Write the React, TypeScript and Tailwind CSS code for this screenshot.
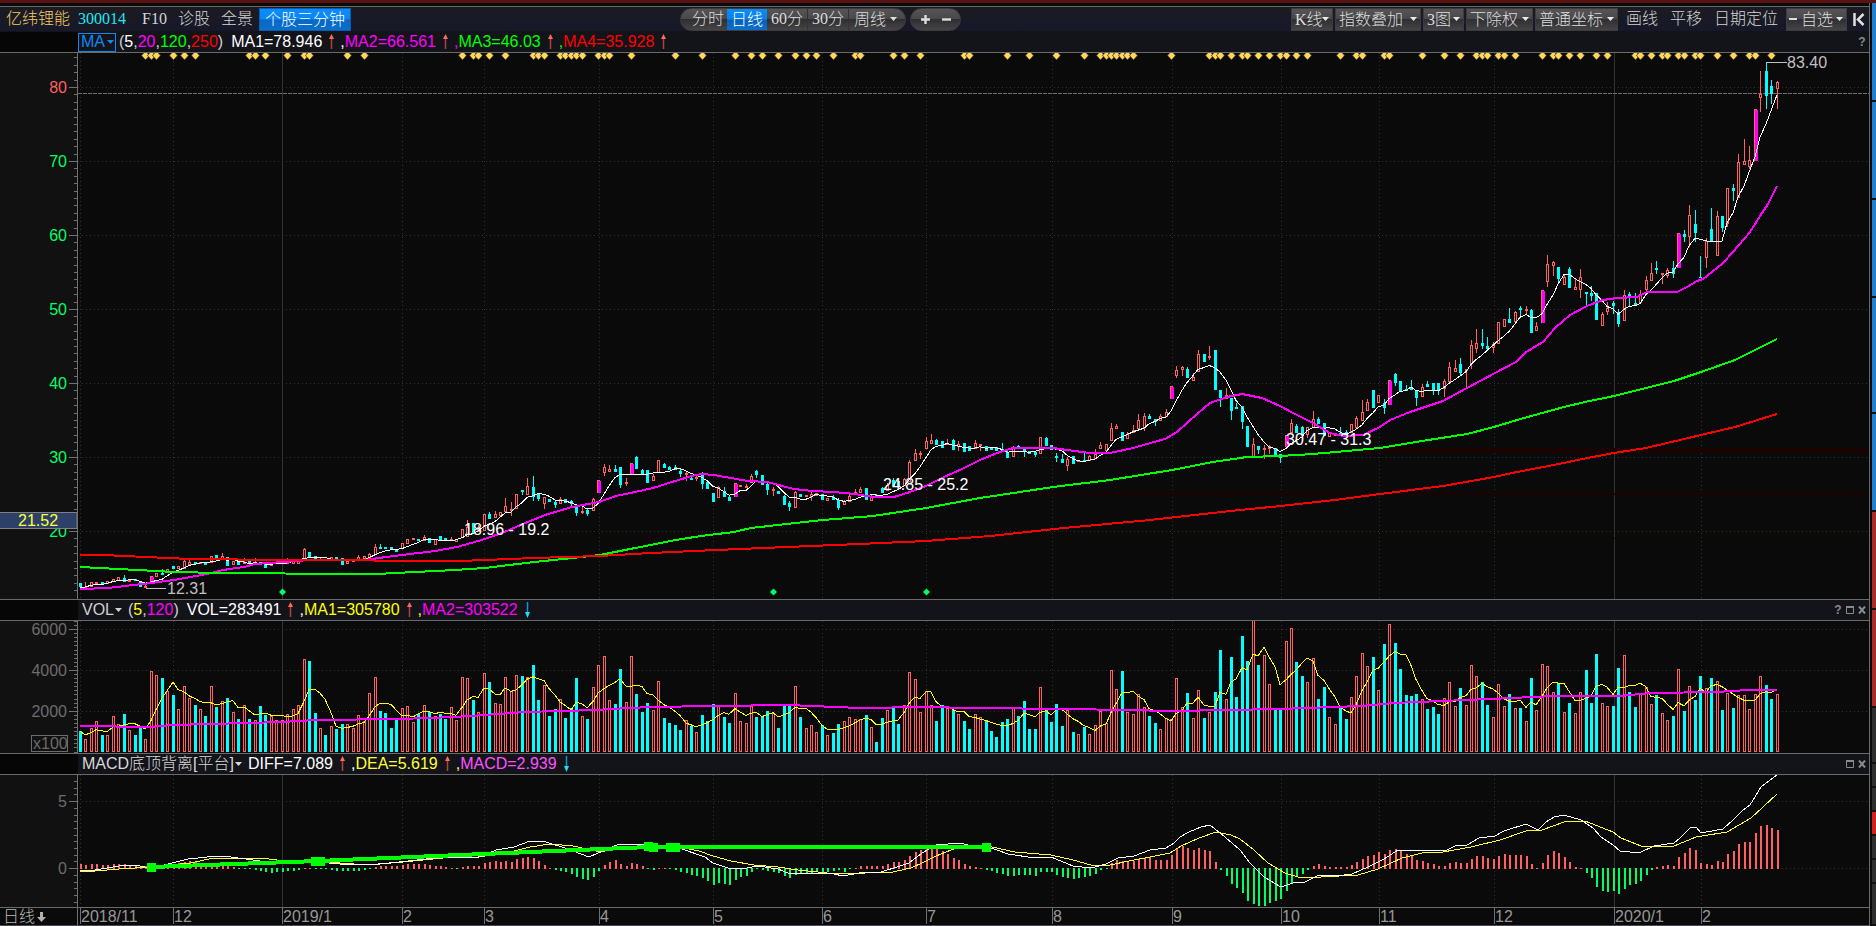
import React from "react";

type Kind = "r" | "c" | "m";
interface Candle {
  kind: Kind;
  high: number;
  top: number;
  bottom: number;
  low: number;
}

const RED = "#ff6060";
const CYAN = "#00ffff";
const MAGENTA = "#ff00ff";
const GREEN = "#00ff66";
const FONT = "'Liberation Sans', 'Noto Sans CJK SC', sans-serif";

const STEP = 5.455;
const FIRST_X = 80;
const barX = (i: number) => Math.round(FIRST_X + i * STEP);

// r = rising, c = falling, m = limit up; numbers are top,bottom | high,top,bottom | high,top,bottom,low
const CANDLES: Candle[] = `
c583,587 r582,587,588 r582,587 r582,584 c582,584 r581,584 r579,582 r577,581 c575,578,582 r580,582
c579,581 c581,587 r584,586,588 m576,583 r573,577 c569,573,575 r569,572 c566,569 r566,569 r560,561,569
r560,562,565 c562,564 r562,564 c563,565 r556,563 c555,558 r553,556,559 c557,566 r561,565 c561,565
r558,562,564 c561,564 r558,562,564 c562,564 c563,568 r563,566 r562,564 r561,564 r558,561,564 r561,564
r560,564 r548,549,559 c552,558 c556,560 r558,559,561 c559,561 r557,560 c557,559 c558,565 r561,564
r560,562 r555,557,560 r556,559 r553,554,559 r544,547,555 c544,547,549 c547,549 c547,550 c549,552 r543,549
r539,544 r538,540 c539,541 r535,537,541 c538,543 r539,545 c536,541 c538,541 r537,539,541 r539,542
r529,538 r520,527,537 c523,534 r525,527,532 r514,531 c512,514,519 r511,514,518 r512,516 r498,506,512 r502,509,511,516
r494,509 c490,490,492,495 r478,486,495 c476,487,497,501 c493,494,499,501 r497,497,504,509 c499,502 c500,502,505,508 r497,499,504 c499,503
c500,501,504,507 c505,505,513,516 r507,511,513,514 c508,510,514,516 r498,499,511 m480,493 r464,467,473,476 r465,469,472 c465,469,472 c467,467,485,488
r478,482,484,486 m463,474 c456,457,469 c469,470,474 c470,483 r474,476,481 r460,473 c463,464,468 c466,467,470 c465,467,470
c469,471,474,477 r472,473,475,481 c475,478,480 r476,477,479,481 c472,475,484,489 c482,489 c493,502 r486,487,498 c487,491,497 c495,497,501
m483,497 r485,487 r484,486,488 r474,476,483 c470,471,475,478 c475,485 c483,484,490,495 r487,489,491,496 c491,494 c495,496,505
c501,503,507,511 r491,492,508 c494,497 r495,497 r492,494,497,501 r493,496 c494,500 r498,501 c495,497,500 c498,500,508,510
r500,501,505 r493,496,502 r489,492,494 r487,489,493 c488,500 r495,497,501 c494,495,497 c487,488,493 r483,485,491 c478,480,486
c481,487 r478,479,486 r460,462,482 r449,453,461 r451,453,455,459 r437,441,449 r434,440,444 c439,440,445 c441,448 r439,443,445
c439,440,450 r441,444,447,451 c443,452 c446,451 r440,443,449 r444,444,446,451 c446,451 c447,450 c447,451 c443,449,451
c450,452,458 r446,448,457 c445,446,449 c448,449,452,457 c451,454 c451,452,455,457 r437,454 c437,438,446 c445,450 c453,456,458,462
c454,459,463 r457,459,466,471 c456,464 r460,462 c453,460,462 r455,456,461 r449,454,459 r442,445,449 r444,451 r423,428,441
r424,426,429 c432,441 r432,434,439 r425,430,433 r414,420,429 r413,416,428,431 c414,416,419 c419,419,422,426 r414,416,421 r409,412,417
m386,399 r366,370,376,378 r366,367,370,376 c367,369,378 r373,377,381 r350,354,372 c354,362 r346,356,358,360 c350,390 c390,390,398,407
r388,395,399 c398,398,411,420 c403,407,409 c406,406,422,429 c426,447 r438,444,457 c446,446,450,454 r445,448,450,459 r445,446,449,454 c448,455
c454,454,458,463 m435,447 r419,423,433 c424,426,433 c426,427,435 r427,427,435,438 r411,419,428 c417,419,424 c423,436 r433,437
r433,436 c427,433,435 c430,432,436 r424,433 r416,418,428 r400,412,421 r399,402,411 c390,408 r395,403 c399,403,408,414
m380,405 c373,374,383,386 c381,391 c385,389,391 c380,388,390 c390,390,398,406 r384,387,397 c381,384,387 c383,383,391,395 c383,383,391,395
r379,381,389,397 r362,367,382 r360,368,372 c358,364,373,375 r369,369,371,388 r340,345,364,369 r329,343,349,353 c329,343,346,349 c337,346,349,351 r342,344,348,353
r322,344 r319,327 c308,319,323 r311,312,322 c306,308,310,318 r306,309,311,314 c309,310,333 r322,326,331 m290,323 r255,264,282,287
r261,262,266,276 c267,267,279,282 r275,277,285 c267,269,288 r278,287,290 r269,277,290,298 c292,292,294,306 c286,293,296,301 c293,320 r312,314,326
r302,308,312,315 c301,303,306,314 c309,312,324,327 r290,295,321 c292,294,298,306 c293,303,306 r290,294,303 r276,280,290,294 r263,273,281 c261,268,270,274
r273,273,275,284 r268,270,276,278 c261,268,274,278 m233,268 c230,234,237,242 r205,215,237,247 c210,224,233,242 c256,277,278 r238,241,258,268 c208,229,242
r211,216,256 c216,216,228,232 r188,188,224,227 c184,188,191,201 r154,162,198 r139,161,165 r146,160,167,169 m109,161 r71,94,98,112 c62,71,96,109
c80,86,94,104 r81,82,89,109
`
  .trim()
  .split(/\s+/)
  .map((token) => {
    const kind = token[0] as Kind;
    const n = token.slice(1).split(",").map(Number);
    if (n.length === 2) return { kind, high: n[0], top: n[0], bottom: n[1], low: n[1] };
    return { kind, high: n[0], top: n[1], bottom: n[2], low: n[3] ?? n[2] };
  });

const VOLUMES: number[] = [
  21, 13, 24, 31, 17, 17, 36, 28, 38, 22, 17, 24, 13, 81, 77, 74, 61, 57, 43, 66, 54, 47, 43, 36, 66, 45, 51, 54, 40, 33,
  47, 33, 32, 46, 37, 36, 32, 32, 38, 43, 47, 93, 91, 39, 24, 17, 26, 23, 28, 28, 24, 37, 31, 59, 75, 41, 39, 24, 32, 44,
  46, 30, 38, 47, 40, 36, 38, 33, 45, 32, 75, 74, 52, 40, 79, 70, 49, 48, 75, 61, 77, 76, 75, 87, 52, 67, 36, 43, 53, 34,
  44, 74, 36, 33, 65, 87, 96, 52, 48, 83, 50, 96, 58, 40, 49, 42, 71, 34, 29, 27, 22, 32, 26, 20, 37, 31, 48, 46, 35, 29,
  59, 31, 29, 46, 35, 36, 41, 39, 24, 46, 47, 66, 35, 24, 27, 20, 27, 17, 19, 28, 31, 35, 33, 33, 37, 25, 10, 34, 42, 46,
  28, 47, 80, 73, 40, 61, 47, 31, 47, 44, 42, 38, 31, 23, 38, 35, 31, 21, 15, 30, 33, 44, 36, 51, 23, 23, 65, 44, 30, 48,
  26, 42, 20, 18, 25, 18, 27, 41, 29, 82, 63, 81, 40, 38, 58, 45, 36, 29, 23, 34, 33, 74, 45, 59, 34, 62, 34, 40, 60, 102,
  53, 95, 55, 116, 91, 132, 87, 97, 68, 42, 43, 111, 124, 90, 76, 70, 94, 53, 65, 35, 28, 44, 33, 55, 76, 99, 86, 95, 62, 108,
  128, 109, 83, 57, 56, 58, 53, 43, 45, 38, 54, 70, 46, 64, 47, 87, 76, 70, 47, 35, 68, 46, 58, 44, 44, 31, 74, 42, 88, 86,
  60, 69, 40, 49, 39, 60, 82, 49, 98, 49, 46, 46, 84, 97, 60, 45, 59, 65, 48, 57, 39, 32, 36, 83, 41, 66, 52, 76, 64, 74,
  71, 42, 59, 44, 57, 57, 43, 58, 76, 67, 53, 58,
];

const HISTOGRAM: number[] = [
  5, 4, 5, 5, 4, 4, 5, 5, 5, 4, 4, 3, 3, 2, 2, 3, 4, 5, 6, 7, 8, 7, 6, 5, 6, 5, 4, 3, 2, -1,
  -1, -1, -2, -3, -4, -5, -4, -4, -3, -3, -2, 1, 1, -1, -1, -1, -2, -3, -3, -3, -3, -3, -2, -1, 2, 3, 3, 3, 3, 4,
  5, 5, 5, 5, 4, 3, 3, 2, 1, -1, 2, 3, 3, 3, 6, 7, 8, 7, 8, 7, 10, 11, 12, 11, 8, 4, 1, -2, -3, -4,
  -6, -9, -11, -12, -9, -3, 4, 7, 9, 5, 3, 6, 5, 3, -1, -2, 1, 1, -1, -2, -4, -5, -7, -8, -10, -13, -17, -15, -16, -17,
  -12, -9, -8, -4, -1, -2, -3, -4, -5, -8, -10, -7, -6, -6, -5, -4, -4, -4, -3, -2, -4, -1, 1, 3, 3, 3, 3, 3, 5, 7,
  7, 9, 13, 17, 19, 20, 20, 20, 18, 15, 11, 9, 5, 3, 2, 1, -2, -3, -5, -6, -8, -8, -7, -7, -7, -8, -4, -4, -4, -7,
  -9, -10, -11, -10, -9, -8, -6, -2, -1, 6, 9, 8, 7, 8, 10, 11, 12, 9, 9, 9, 14, 20, 23, 21, 19, 21, 19, 18, 7, -2,
  -8, -16, -20, -25, -33, -36, -38, -38, -35, -33, -31, -23, -15, -9, -6, -2, 3, 5, 3, 2, 2, 2, 2, 4, 7, 10, 13, 14, 17, 15,
  19, 20, 18, 15, 13, 9, 8, 6, 5, 3, 3, 6, 7, 6, 6, 10, 13, 13, 11, 10, 13, 15, 14, 14, 14, 13, 5, 1, 6, 14,
  18, 16, 12, 7, 2, 1, -5, -10, -19, -23, -24, -23, -26, -21, -17, -16, -13, -7, -2, 2, 3, 4, 3, 12, 16, 21, 19, 6, 5, 4,
  8, 7, 15, 18, 25, 27, 27, 36, 43, 44, 41, 39,
];

const SIGNALS: number[] = [
  12, 13, 14, 17, 19, 21, 31, 32, 34, 38, 41, 42, 49, 52, 70, 72, 73, 75, 78, 83, 84, 85, 88, 89, 90, 91, 92, 95, 96, 97,
  101, 109, 114, 120, 123, 125, 128, 131, 133, 135, 138, 142, 143, 149, 151, 154, 162, 163, 170, 174, 179, 184, 187, 188,
  189, 190, 191, 192, 193, 200, 207, 208, 209, 211, 213, 214, 216, 218, 220, 221, 223, 225, 231, 234, 235, 239, 240, 246,
  250, 253, 256, 257, 258, 260, 261, 263, 268, 270, 271, 273, 275, 278, 280, 285, 286, 288, 290, 291, 293, 294, 296, 297,
  300, 303, 306, 307, 310,
];

const MONTHS: { x: number; label: string; year?: boolean }[] = [
  { x: 80, label: "2018/11" },
  { x: 173, label: "12" },
  { x: 282, label: "2019/1", year: true },
  { x: 402, label: "2" },
  { x: 484, label: "3" },
  { x: 599, label: "4" },
  { x: 713, label: "5" },
  { x: 822, label: "6" },
  { x: 926, label: "7" },
  { x: 1052, label: "8" },
  { x: 1172, label: "9" },
  { x: 1281, label: "10" },
  { x: 1379, label: "11" },
  { x: 1494, label: "12" },
  { x: 1614, label: "2020/1", year: true },
  { x: 1701, label: "2" },
];

const MA20 =
  "80,589 108,588 151,583 174,580 207,574 223,570 244,567 255,564 283,562 310,560 365,560 386,557 402,555 435,551 457,547 485,539 507,531 523,524 545,515 572,507 599,502 616,496 635,492 653,488 675,481 692,476 701,474 714,475 725,477 748,481 767,482 794,489 812,491 834,492 855,494 873,497 894,497 910,492 926,486 944,477 962,469 980,460 997,453 1013,448 1053,448 1067,450 1090,453 1110,453 1133,448 1147,444 1165,439 1177,432 1197,414 1210,403 1227,397 1242,394 1262,398 1280,406 1293,413 1313,423 1330,433 1343,436 1363,435 1380,427 1390,420 1410,412 1422,408 1443,401 1467,388 1495,373 1516,362 1526,352 1543,342 1555,328 1570,315 1587,306 1603,300 1617,298 1637,297 1647,292 1677,292 1687,287 1697,281 1703,279 1717,268 1723,263 1733,252 1750,232 1762,213 1768,204 1777,186";
const MA120 =
  "80,567 119,569 174,572 221,573 348,574 376,574 415,572 455,570 485,568 534,562 573,558 600,555 630,549 676,540 701,536 734,532 751,528 787,524 823,520 873,516 926,508 980,498 1020,492 1053,487 1110,480 1172,470 1213,462 1247,457 1280,456 1313,454 1380,448 1422,441 1467,434 1494,427 1524,418 1564,407 1585,402 1614,396 1646,388 1674,381 1701,372 1735,360 1759,348 1777,339";
const MA250 =
  "80,555 103,555 146,557 190,559 285,560 460,561 534,558 600,556 651,553 716,550 787,547 859,544 926,541 990,536 1064,528 1150,520 1240,510 1281,506 1335,500 1380,494 1443,486 1494,477 1512,473 1564,463 1577,460 1614,453 1646,448 1701,435 1735,427 1777,414";
const VOL_MA120 =
  "80,726 151,727 172,725 210,724 282,722 315,720 400,719 455,717 485,715 523,712 598,710 610,709 650,707 715,706 788,705 860,708 925,707 973,708 1070,709 1175,711 1224,710 1280,709 1361,706 1393,703 1466,700 1490,699 1555,696 1619,696 1652,693 1716,692 1748,690 1777,690";
const DIFF =
  "80,870 95,870 119,866 134,865 151,868 168,864 188,859 217,856 231,857 253,860 273,863 308,861 340,864 368,865 399,862 435,858 480,857 496,850 514,847 530,841 546,842 565,848 589,857 605,850 617,845 636,844 679,848 705,857 713,863 731,869 747,868 758,866 778,869 790,874 814,873 834,874 843,876 859,873 881,872 897,867 909,863 922,853 936,845 960,843 976,847 994,849 1008,854 1035,858 1051,857 1073,866 1091,868 1106,864 1118,858 1134,856 1150,850 1166,848 1174,843 1180,837 1189,832 1201,827 1210,825 1225,837 1240,850 1250,863 1264,877 1281,887 1293,883 1305,882 1319,875 1337,876 1352,874 1368,867 1384,859 1398,850 1418,850 1447,850 1455,846 1467,845 1479,838 1495,836 1504,831 1526,824 1538,830 1546,822 1554,817 1564,815 1581,820 1593,828 1601,837 1613,845 1620,851 1639,853 1654,846 1674,843 1680,838 1690,828 1696,827 1701,833 1723,829 1733,820 1743,810 1750,805 1761,787 1777,775";
const DEA =
  "80,872 95,871 119,869 151,867 190,863 214,858 261,858 293,862 340,863 368,865 403,862 443,858 478,857 506,853 530,847 550,844 573,846 601,852 620,847 679,847 699,851 713,856 731,861 754,865 778,867 798,870 837,874 865,873 893,872 911,868 922,863 936,856 956,848 992,847 1015,852 1051,855 1073,860 1091,865 1110,865 1134,860 1150,857 1170,853 1181,846 1199,838 1216,832 1231,835 1240,839 1254,850 1268,863 1285,873 1301,878 1321,877 1358,875 1378,869 1402,858 1422,853 1443,852 1471,847 1500,840 1526,831 1542,830 1564,822 1585,821 1613,832 1621,838 1641,846 1674,846 1696,837 1727,832 1751,818 1763,807 1777,794";

const movingAverage = (values: number[], span: number) =>
  values
    .map((_, i) => {
      const slice = values.slice(Math.max(0, i - span + 1), i + 1);
      return `${barX(i)},${(slice.reduce((a, b) => a + b, 0) / slice.length).toFixed(1)}`;
    })
    .join(" ");

const PRICE_MA5 = movingAverage(
  CANDLES.map((c) => (c.kind === "c" ? c.bottom : c.top)),
  5,
);
const VOLUME_MA5 = movingAverage(
  VOLUMES.map((v) => 752 - v),
  5,
);

const PLOT_LEFT = 78;
const priceY = (price: number) => Math.round(87 + (80 - price) * 7.4);

function Grid({ top, height, rows }: { top: number; height: number; rows: number[] }) {
  return (
    <g shapeRendering="crispEdges">
      {rows.map((y) => (
        <line key={y} x1="0" x2="100%" y1={y - top + 0.5} y2={y - top + 0.5} stroke="#303030" strokeDasharray="1 3" />
      ))}
      {MONTHS.map((m) => (
        <line
          key={m.x}
          x1={m.x - PLOT_LEFT + 0.5}
          x2={m.x - PLOT_LEFT + 0.5}
          y1={0}
          y2={height}
          stroke={m.year ? "#333333" : "#303030"}
          strokeDasharray={m.year ? undefined : "1 3"}
        />
      ))}
    </g>
  );
}

function PriceChart() {
  return (
    <svg className="block w-full" height="546" fontFamily={FONT} fontSize="16" role="img" aria-label="日K线">
      <Grid top={53} height={546} rows={[80, 70, 60, 50, 40, 30, 20].map(priceY)} />
      <g fill="#1a0303" shapeRendering="crispEdges">
        <rect x="1285" y="395" width="100%" height="5" />
        <rect x="815" y="440" width="100%" height="2" />
        <rect x="420" y="485" width="100%" height="1" />
      </g>
      <line x1="0" x2="100%" y1="40.5" y2="40.5" stroke="#6e6e6e" strokeDasharray="4 1" shapeRendering="crispEdges" />
      <g transform="translate(-78 -53)">
        {SIGNALS.map((i) => (
          <g key={i} transform={`translate(${barX(i) + 0.5} 55.5)`}>
            <path d="M0-4.500 4.500 0 0 4.500-4.500 0Z" fill="#5a4a20" />
            <path d="M0-4 3.500 0 0 4-3.500 0Z" fill="#ffd75e" />
          </g>
        ))}
        {[282, 773, 926].map((x) => (
          <path key={x} d={`M${x + 0.5} 588.5l3.5 3.5-3.5 3.5-3.5-3.5Z`} fill={GREEN} />
        ))}
        <g shapeRendering="crispEdges">
          {CANDLES.map((c, i) => {
            const x = barX(i);
            const h = Math.max(1, c.bottom - c.top);
            const color = c.kind === "c" ? CYAN : RED;
            return (
              <g key={i}>
                <rect x={x} y={c.high} width="1" height={Math.max(0, c.top - c.high)} fill={color} />
                <rect x={x} y={c.bottom} width="1" height={Math.max(0, c.low - c.bottom)} fill={color} />
                {c.kind === "r" && h > 2 ? (
                  <rect x={x - 0.5} y={c.top + 0.5} width="2" height={h - 1} fill="#0a0a0a" stroke={RED} />
                ) : (
                  <rect x={x - 1} y={c.top} width="3" height={h} fill={color} />
                )}
                {c.kind === "m" && <rect x={x} y={c.top + 1} width="3" height={h - 1} fill={MAGENTA} />}
              </g>
            );
          })}
          <g fill="none">
            <polyline points={PRICE_MA5} stroke="#ffffff" />
            <polyline points={MA20} stroke={MAGENTA} strokeWidth="2" />
            <polyline points={MA120} stroke="#00ff00" strokeWidth="2" />
            <polyline points={MA250} stroke="#ff0000" strokeWidth="2" />
            <path d="M146 588.5h20M1767 62.5h20" stroke="#c0c0c0" />
          </g>
        </g>
        <g fill="#c0c0c0">
          <text x="167" y="594">12.31</text>
          <text x="1787" y="68">83.40</text>
        </g>
        <g fill="#ffffff">
          <text x="464" y="535">18.96 - 19.2</text>
          <text x="883" y="490">24.85 - 25.2</text>
          <text x="1286" y="445">30.47 - 31.3</text>
        </g>
      </g>
    </svg>
  );
}

function VolumeChart() {
  return (
    <svg className="block w-full" height="132" role="img" aria-label="成交量">
      <Grid top={621} height={132} rows={[629, 670, 711]} />
      <g transform="translate(-78 -621)" shapeRendering="crispEdges">
        {VOLUMES.map((v, i) => {
          const x = barX(i);
          return CANDLES[i]?.kind === "c" ? (
            <rect key={i} x={x - 1} y={752 - v} width="3" height={v} fill={CYAN} />
          ) : (
            <rect key={i} x={x - 0.5} y={752.5 - v} width="2" height={v - 1} fill="#0a0a0a" stroke={RED} />
          );
        })}
        <polyline points={VOLUME_MA5} fill="none" stroke="#ffff00" />
        <polyline points={VOL_MA120} fill="none" stroke={MAGENTA} strokeWidth="2" />
      </g>
    </svg>
  );
}

function MacdChart() {
  return (
    <svg className="block w-full" height="132" role="img" aria-label="MACD">
      <Grid top={775} height={132} rows={[801, 868]} />
      <g transform="translate(-78 -775)" shapeRendering="crispEdges">
        {HISTOGRAM.map((v, i) => (
          <rect
            key={i}
            x={barX(i)}
            y={v > 0 ? 869 - v : 868}
            width="2"
            height={Math.abs(v)}
            fill={v > 0 ? RED : GREEN}
          />
        ))}
        <polyline points={DEA} fill="none" stroke="#ffff33" />
        <polyline points={DIFF} fill="none" stroke="#ffffff" />
        <g fill="#00ff00">
          <polyline points="151,867 318,861 649,847 986,847" fill="none" stroke="#00ff00" strokeWidth="4" />
          <rect x="147" y="863" width="9" height="9" />
          <rect x="311" y="857" width="14" height="9" />
          <rect x="644" y="842" width="9" height="9" />
          <rect x="649" y="843" width="9" height="9" />
          <rect x="666" y="843" width="14" height="9" />
          <rect x="982" y="843" width="9" height="9" />
        </g>
      </g>
    </svg>
  );
}

function Scale({
  top,
  height,
  minor,
  labels,
  children,
}: {
  top: number;
  height: number;
  minor: number[];
  labels: { y: number; text: string; color: string }[];
  children?: React.ReactNode;
}) {
  return (
    <svg className="block w-[77px]" height={height} fontFamily={FONT} fontSize="16">
      <g transform={`translate(0 ${-top})`}>
        <g fill="#707070" shapeRendering="crispEdges">
          {minor.map((y) => (
            <rect key={y} x="74" y={Math.round(y)} width="3" height="1" />
          ))}
          {labels.map((l) => (
            <rect key={l.text} x="69" y={l.y} width="8" height="1" />
          ))}
        </g>
        {labels.map((l) => (
          <text key={l.text} x="67" y={l.y + 6} textAnchor="end" fill={l.color}>
            {l.text}
          </text>
        ))}
        {children}
      </g>
    </svg>
  );
}

const range = (start: number, end: number, step: number) =>
  Array.from({ length: Math.floor((end - start) / step) + 1 }, (_, i) => start + i * step);

function PlotRow({ scale, chart }: { scale: React.ReactNode; chart: React.ReactNode }) {
  return (
    <div className="flex border-b border-[#6a6a6a]">
      <div className="w-[78px] shrink-0 border-r border-[#707070] bg-[#111112]">{scale}</div>
      <div className="min-w-0 flex-1 overflow-hidden bg-[#0a0a0a]">{chart}</div>
    </div>
  );
}

function HeaderRow({ children, tools }: { children: React.ReactNode; tools: React.ReactNode }) {
  return (
    <div className="flex h-[21px] border-b border-[#6a6a6a]">
      <div className="w-[78px] shrink-0 bg-[#060606]" />
      <div className="flex min-w-0 flex-1 items-center justify-between bg-[#13131a]">
        <div className="flex items-center whitespace-nowrap text-[16px] leading-[20px]">{children}</div>
        <div className="flex items-center gap-1 pr-[3px] text-[#8a8a8a]">{tools}</div>
      </div>
    </div>
  );
}

function Arrow({ down }: { down?: boolean }) {
  return (
    <svg className="w-[18px] shrink-0" height="18" viewBox="0 0 18 18" aria-hidden="true">
      {down ? (
        <g>
          <path d="M9.500 1v12" stroke="#1a90d0" strokeWidth="1.5" />
          <path d="M7 11h5l-2.500 6Z" fill="#20e0f0" />
        </g>
      ) : (
        <g>
          <path d="M9.500 5v11" stroke="#b04038" strokeWidth="1.5" />
          <path d="M7 6h5L9.500 1Z" fill="#ff6a5a" />
        </g>
      )}
    </svg>
  );
}

function Caret() {
  return (
    <svg className="shrink-0" width="7" height="4" viewBox="0 0 7 4" aria-hidden="true">
      <path d="M0 0h7L3.500 4Z" fill="currentColor" />
    </svg>
  );
}

function Help() {
  return (
    <button type="button" aria-label="帮助" className="w-2 text-center text-[12px] font-bold leading-[20px]">
      ?
    </button>
  );
}

function WindowTools() {
  return (
    <>
      <button type="button" aria-label="最大化">
        <svg width="8" height="8" viewBox="0 0 8 8">
          <path d="M.5 1h7v6.500h-7Z" fill="none" stroke="currentColor" />
          <path d="M0 1h8" stroke="currentColor" strokeWidth="2" />
        </svg>
      </button>
      <button type="button" aria-label="关闭">
        <svg width="8" height="8" viewBox="0 0 8 8">
          <path d="M1 .5 7 7.500M7 .5 1 7.500" stroke="currentColor" strokeWidth="2" />
        </svg>
      </button>
    </>
  );
}

function Drop({ label, width, dash }: { label: string; width: string; dash?: boolean }) {
  return (
    <label
      className={`relative flex h-[23px] items-center border border-[#3c3c3e] bg-[linear-gradient(#555557_0%,#48484a_48%,#2f2f31_50%,#454547_100%)] ${width}`}
    >
      {dash && <span className="ml-[2px] h-[2px] w-2 shrink-0 bg-[#dddddd]" />}
      <select
        aria-label={label}
        className={`w-full appearance-none bg-transparent leading-[21px] text-[#dcdcdc] outline-none ${dash ? "pl-1" : "pl-[3px]"}`}
      >
        <option>{label}</option>
      </select>
      <span className="pointer-events-none absolute right-[3px] text-[#e8e8e8]">
        <Caret />
      </span>
    </label>
  );
}

function Toolbar() {
  return (
    <header className="flex h-[25px] items-center border-t border-[#6a6a6a] bg-[linear-gradient(#1b1b22,#161829)] font-['Liberation_Serif','Noto_Sans_CJK_SC',serif] text-[16px] font-light leading-[22px] text-[#d4d4d4]">
      <div className="flex w-[680px] items-center whitespace-nowrap pl-[6px]">
        <span className="text-[#f0cc60]">亿纬锂能</span>
        <span className="ml-2 text-[#20e8f0]">300014</span>
        <button type="button" className="ml-4">F10</button>
        <button type="button" className="ml-[11px]">诊股</button>
        <button type="button" className="ml-[11px]">全景</button>
        <button
          type="button"
          className="ml-[6px] h-[23px] border border-[#0a5cb0] bg-[linear-gradient(#0a8cff,#0a86f0_48%,#0568c4_52%,#0a70cc)] px-[5px] text-white"
        >
          个股三分钟
        </button>
      </div>
      <div className="flex shrink-0 items-center gap-1 text-[#dcdcdc]">
        <div className="flex h-[23px] items-center overflow-hidden rounded-full border border-[#3c3c3e] bg-[linear-gradient(#555557_0%,#48484a_48%,#2f2f31_50%,#454547_100%)]">
          <button type="button" className="w-[46px] pl-2">分时</button>
          <button type="button" className="h-full w-10 bg-[linear-gradient(#0a8cff,#0a80e8_48%,#0560b8_52%,#0a70cc)] text-white">
            日线
          </button>
          <button type="button" className="w-[41px] border-r border-[#333335]">60分</button>
          <button type="button" className="w-[41px] border-r border-[#333335]">30分</button>
          <label className="relative flex w-14 items-center">
            <select aria-label="周期" className="w-full appearance-none bg-transparent pl-[5px] leading-[21px] outline-none">
              <option>周线</option>
            </select>
            <span className="pointer-events-none absolute right-2">
              <Caret />
            </span>
          </label>
        </div>
        <div className="flex h-[23px] w-[51px] items-center justify-center gap-3 rounded-full border border-[#3c3c3e] bg-[linear-gradient(#555557_0%,#48484a_48%,#2f2f31_50%,#454547_100%)]">
          <button type="button" aria-label="放大">
            <svg width="9" height="9" viewBox="0 0 9 9">
              <path d="M4.500 0v9M0 4.500h9" stroke="currentColor" strokeWidth="2.4" />
            </svg>
          </button>
          <button type="button" aria-label="缩小">
            <svg width="9" height="9" viewBox="0 0 9 9">
              <path d="M0 4.500h9" stroke="currentColor" strokeWidth="2.4" />
            </svg>
          </button>
        </div>
      </div>
      <div className="flex flex-1 items-center justify-end gap-[2px] whitespace-nowrap pr-1">
        <Drop label="K线" width="w-[42px]" />
        <Drop label="指数叠加" width="w-[86px]" />
        <Drop label="3图" width="w-[41px]" />
        <Drop label="下除权" width="w-[67px]" />
        <Drop label="普通坐标" width="w-[83px]" />
        <div className="flex gap-3 px-[6px]">
          <button type="button">画线</button>
          <button type="button">平移</button>
          <button type="button">日期定位</button>
        </div>
        <Drop label="自选" width="w-[61px]" dash />
        <button type="button" aria-label="收起" className="ml-1">
          <svg width="12" height="13" viewBox="0 0 12 13">
            <path d="M1.500 0v13" stroke="#e0e0e0" strokeWidth="2.500" />
            <path d="M10.500 1 5 6.500l5.500 5.500" fill="none" stroke="#e0e0e0" strokeWidth="2.500" />
          </svg>
        </button>
      </div>
    </header>
  );
}

const STRIP: string[] = [
  "h-[97px] bg-[#2080d0]",
  "h-24 bg-[#2080d0]",
  "h-24 bg-[#2080d0]",
  "h-[114px] bg-[#2080d0]",
  "h-24 bg-[#2080d0]",
  "h-24 bg-[#a82c2c]",
  "h-24 bg-[#a82c2c]",
  "h-[54px] bg-[#2e2e2e]",
  "h-[22px] bg-[#2e2e2e]",
  "h-[22px] bg-[#2e2e2e]",
  "h-[22px] bg-[#d02020]",
  "h-[22px] bg-[#2e2e2e]",
  "h-[22px] bg-[#2e2e2e]",
  "h-10 bg-[#2e2e2e]",
];

export default function App() {
  return (
    <div className="min-h-screen overflow-hidden bg-[#0a0a0a] font-['Liberation_Sans','Noto_Sans_CJK_SC',sans-serif]">
      <div className="h-[3px] bg-[#581414]" />
      <div className="flex">
        <main className="min-w-0 flex-1 border-r border-[#6a6a6a] pt-[3px]">
          <Toolbar />
          <div className="h-px bg-[#13131a]" />
          <HeaderRow tools={<Help />}>
            <button type="button" className="flex h-[19px] w-[38px] items-center gap-[2px] border border-[#1088f0] pl-[2px] text-[#1088f0]">
              <span>MA</span>
              <Caret />
            </button>
            <span className="pl-[3px] text-[#d0d0d0]">
              (<span className="text-white">5</span>,<span className="text-[#ff00ff]">20</span>,
              <span className="text-[#00ff00]">120</span>,<span className="text-[#ff0000]">250</span>)
            </span>
            <span className="pl-2 text-white">MA1=78.946</span>
            <Arrow />
            <span className="text-white">,</span>
            <span className="text-[#ff00ff]">MA2=66.561</span>
            <Arrow />
            <span className="text-[#ff00ff]">,</span>
            <span className="text-[#00ff00]">MA3=46.03</span>
            <Arrow />
            <span className="text-[#00ff00]">,</span>
            <span className="text-[#ff0000]">MA4=35.928</span>
            <Arrow />
          </HeaderRow>
          <PlotRow
            scale={
              <Scale
                top={53}
                height={546}
                minor={range(12, 84, 1).map(priceY)}
                labels={[80, 70, 60, 50, 40, 30, 20].map((p) => ({
                  y: priceY(p),
                  text: String(p),
                  color: p === 80 ? RED : GREEN,
                }))}
              >
                <rect x="-1" y="512.5" width="78" height="16" fill="#2c4068" stroke="#808080" />
                <text x="18" y="526" fill="#ffff40">
                  21.52
                </text>
              </Scale>
            }
            chart={<PriceChart />}
          />
          <HeaderRow
            tools={
              <>
                <Help />
                <WindowTools />
              </>
            }
          >
            <button type="button" className="flex items-center gap-px pl-1 text-[#d0d0d0]">
              <span>VOL</span>
              <Caret />
            </button>
            <span className="pl-[6px] text-[#d0d0d0]">
              (<span className="text-[#ffff00]">5</span>,<span className="text-[#ff00ff]">120</span>)
            </span>
            <span className="pl-2 text-white">VOL=283491</span>
            <Arrow />
            <span className="text-white">,</span>
            <span className="text-[#ffff00]">MA1=305780</span>
            <Arrow />
            <span className="text-[#ffff00]">,</span>
            <span className="text-[#ff00ff]">MA2=303522</span>
            <Arrow down />
          </HeaderRow>
          <PlotRow
            scale={
              <Scale
                top={621}
                height={132}
                minor={range(621, 752, 4.08)}
                labels={[
                  { y: 629, text: "6000", color: "#6c6c6c" },
                  { y: 670, text: "4000", color: "#6c6c6c" },
                  { y: 711, text: "2000", color: "#6c6c6c" },
                ]}
              >
                <rect x="31.500" y="735.500" width="36" height="16" fill="none" stroke="#6c6c6c" />
                <text x="33" y="749" fill="#6c6c6c">
                  x100
                </text>
              </Scale>
            }
            chart={<VolumeChart />}
          />
          <HeaderRow tools={<WindowTools />}>
            <button type="button" className="flex items-center gap-px pl-1 font-light text-[#d8d8d8]">
              <span>MACD底顶背离[平台]</span>
              <Caret />
            </button>
            <span className="pl-[6px] text-white">DIFF=7.089</span>
            <Arrow />
            <span className="text-white">,</span>
            <span className="text-[#ffff33]">DEA=5.619</span>
            <Arrow />
            <span className="text-[#ffff33]">,</span>
            <span className="text-[#ff50ff]">MACD=2.939</span>
            <Arrow down />
          </HeaderRow>
          <PlotRow
            scale={
              <Scale
                top={775}
                height={132}
                minor={range(781, 906, 6.7)}
                labels={[
                  { y: 801, text: "5", color: "#6c6c6c" },
                  { y: 868, text: "0", color: "#6c6c6c" },
                ]}
              />
            }
            chart={<MacdChart />}
          />
          <footer className="flex border-b border-[#4a4a52] text-[16px] leading-[16px]">
            <button type="button" className="flex w-[78px] shrink-0 items-center gap-[2px] border-r border-[#707070] pl-[3px] font-light text-[#b8b8b8]">
              <span>日线</span>
              <svg width="9" height="10" viewBox="0 0 9 10" aria-hidden="true">
                <path d="M3 0h3v5h3L4.500 10 0 5h3Z" fill="#b0b0b0" />
              </svg>
            </button>
            <svg className="block min-w-0 flex-1" height="17" fontFamily={FONT} fontSize="16">
              {MONTHS.map((m) => (
                <g key={m.x}>
                  <rect x={m.x - PLOT_LEFT} y="0" width="1" height="16" fill="#707070" />
                  <text x={m.x - PLOT_LEFT + 1} y="14" fill="#989898">
                    {m.label}
                  </text>
                </g>
              ))}
            </svg>
          </footer>
        </main>
        <aside className="ml-[2px] flex h-[923px] w-1 shrink-0 flex-col gap-[2px] overflow-hidden bg-[#101010]">
          {STRIP.map((s, i) => (
            <div key={i} className={`shrink-0 ${s}`} />
          ))}
        </aside>
      </div>
    </div>
  );
}
